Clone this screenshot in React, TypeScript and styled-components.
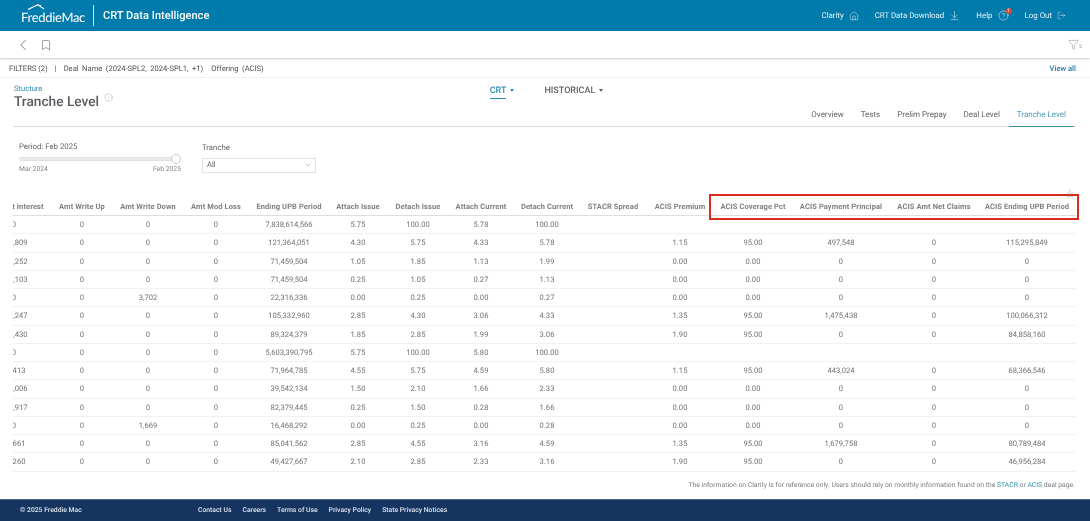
import { FC } from "react";
import styled, { createGlobalStyle } from "styled-components";
import {
  ArrowDownToLine,
  Bookmark,
  ChevronDown,
  ChevronLeft,
  CircleHelp,
  Funnel,
  House,
  Info,
  LogOut,
} from "lucide-react";

const GlobalStyle = createGlobalStyle`
  html, body {
    margin: 0;
    padding: 0;
    background: #fff;
    font-family: Roboto, "Liberation Sans", sans-serif;
    color: #5f6368;
  }
  * { box-sizing: border-box; }
`;

const Page = styled.div`
  width: 1090px;
  height: 521px;
  display: flex;
  flex-direction: column;
  overflow: hidden;
  will-change: transform;
  text-rendering: geometricPrecision;
`;

/* top bar */
const TopBar = styled.header`
  height: 31px;
  flex: none;
  background: #007bab;
  display: flex;
  align-items: center;
  justify-content: space-between;
  padding: 0 24px 0 21px;
  color: #fff;
`;
const Brand = styled.div`
  display: flex;
  align-items: center;
`;
const Logo = styled.div`
  position: relative;
  font-family: Lato, sans-serif;
  font-size: 13px;
  letter-spacing: -0.3px;
  width: 62px;
  padding-top: 3px;
  white-space: nowrap;
  svg {
    position: absolute;
    left: 7px;
    top: -2px;
  }
`;
const BrandDivider = styled.div`
  width: 1px;
  height: 21px;
  background: #d7ecf4;
  margin: 0 9px 0 10px;
`;
const AppName = styled.div`
  font-size: 11.1px;
  font-weight: 500;
  white-space: nowrap;
`;
const TopNav = styled.nav`
  display: flex;
  align-items: center;
  gap: 16px;
`;
const TopLink = styled.a`
  position: relative;
  display: flex;
  align-items: center;
  gap: 5px;
  font-size: 7.9px;
  color: #e6f3f8;
  white-space: nowrap;
`;
const Alert = styled.span`
  position: absolute;
  right: -3px;
  top: -2px;
  width: 6px;
  height: 6px;
  border-radius: 50%;
  background: #e2482d;
  color: #fff;
  font-size: 5px;
  line-height: 6px;
  text-align: center;
`;

/* toolbar + filters */
const Toolbar = styled.div`
  height: 27px;
  flex: none;
  display: flex;
  align-items: center;
  justify-content: space-between;
  padding: 0 8px 0 14px;
  box-shadow: 0 1px 2px rgba(0, 0, 0, 0.22);
  position: relative;
`;
const ToolGroup = styled.div`
  display: flex;
  align-items: center;
  gap: 7.5px;
  color: #555;
`;
const FilterIcon = styled.div`
  display: flex;
  align-items: flex-end;
  color: #777;
  font-size: 5px;
  line-height: 5px;
`;
const FilterBar = styled.div`
  height: 20px;
  flex: none;
  display: flex;
  align-items: center;
  padding: 2px 14px 0 9px;
  font-size: 7.6px;
  color: #4c4f53;
  border-bottom: 1px solid #f1f1f1;
  white-space: pre;
`;
const FilterSep = styled.span`
  margin: 0 7px;
`;
const FilterItem = styled.span`
  margin-right: 8px;
  word-spacing: 1.6px;
`;
const ViewAll = styled.a`
  margin-left: auto;
  color: #2a79a8;
  font-weight: 500;
`;

/* title area */
const TitleArea = styled.section`
  height: 49px;
  flex: none;
  margin: 0 14px 0 13px;
  border-bottom: 1px solid #dcdcdc;
  display: grid;
  grid-template-columns: 1fr auto 1fr;
  position: relative;
`;
const TitleBlock = styled.div`
  padding: 6px 0 0 1px;
`;
const Crumb = styled.div`
  font-size: 7.6px;
  line-height: 10px;
  color: #2b8db3;
`;
const TitleRow = styled.div`
  display: flex;
  align-items: flex-start;
  gap: 5px;
  color: #5a5d61;
  svg {
    margin-top: -1px;
    color: #999;
  }
`;
const Title = styled.h1`
  margin: 0;
  font-size: 13.7px;
  line-height: 17px;
  font-weight: 500;
`;
const Modes = styled.div`
  display: flex;
  gap: 30px;
  padding: 7px 0 0 4px;
`;
const Mode = styled.div<{ $active?: boolean }>`
  display: flex;
  gap: 4px;
  font-size: 9px;
  line-height: 12px;
  font-weight: 500;
  height: 14px;
  color: ${(p) => (p.$active ? "#2b8db3" : "#5f6368")};
  span {
    border-bottom: ${(p) => (p.$active ? "1px solid #2b8db3" : "none")};
  }
  &::after {
    content: "";
    width: 0;
    height: 0;
    margin-top: 4px;
    border-left: 2.5px solid transparent;
    border-right: 2.5px solid transparent;
    border-top: 3px solid currentColor;
  }
`;
const Tabs = styled.div`
  display: flex;
  justify-content: flex-end;
  align-items: flex-end;
  gap: 1px;
  padding-right: 2px;
`;
const Tab = styled.a<{ $active?: boolean }>`
  font-size: 8px;
  line-height: 11px;
  padding: 0 8px 6px;
  margin-bottom: -1px;
  white-space: nowrap;
  color: ${(p) => (p.$active ? "#4f9cbb" : "#5f6368")};
  border-bottom: 1.5px solid ${(p) => (p.$active ? "#3d8fb0" : "transparent")};
`;

/* period + tranche */
const Controls = styled.section`
  height: 71px;
  flex: none;
  display: flex;
  gap: 21px;
  padding: 15px 0 0 19px;
`;
const PeriodBox = styled.div`
  width: 162px;
`;
const ControlLabel = styled.div`
  font-size: 7.8px;
  line-height: 10px;
  color: #5f6368;
`;
const Track = styled.div`
  position: relative;
  height: 4px;
  margin-top: 5px;
  border-radius: 2px;
  background: #ececec;
  border: 1px solid #e0e0e0;
`;
const Knob = styled.div`
  position: absolute;
  right: -1px;
  top: -4px;
  width: 10px;
  height: 10px;
  border-radius: 50%;
  background: #fff;
  border: 1px solid #c9c9c9;
`;
const RangeLabels = styled.div`
  display: flex;
  justify-content: space-between;
  margin-top: 4px;
  font-size: 6.8px;
  line-height: 9px;
  color: #85888c;
`;
const TrancheBox = styled.div`
  padding-top: 1px;
`;
const Select = styled.div`
  width: 114px;
  height: 15px;
  margin-top: 5px;
  border: 1px solid #e2e2e2;
  display: flex;
  align-items: center;
  justify-content: space-between;
  padding: 0 3px 2px 4px;
  font-size: 7.6px;
  color: #5f6368;
  svg {
    color: #777;
  }
`;

/* table */
const COLUMNS = "72px 64px 68px 68px 78px 60px 60px 66px 66px 66px 68px 78px 98px 88px 98px";

const TableArea = styled.section`
  flex: none;
  height: 274px;
  margin: 0 14px 0 13px;
  overflow: hidden;
`;
const Scroller = styled.div`
  width: 1098px;
  margin-left: -35px;
`;
const HeadRow = styled.div`
  display: grid;
  grid-template-columns: ${COLUMNS};
  height: 18px;
  align-items: center;
  border-bottom: 1px solid #dedede;
  font-size: 7.5px;
  font-weight: 700;
  color: #7d7f83;
  letter-spacing: 0.1px;
`;
const Row = styled.div`
  display: grid;
  grid-template-columns: ${COLUMNS};
  height: 18.25px;
  align-items: center;
  border-bottom: 1px solid #f1f1f1;
  font-size: 7.6px;
  color: #707377;
`;
const Cell = styled.div`
  text-align: center;
  white-space: nowrap;
  display: flex;
  justify-content: center;
`;
const Highlight = styled.div`
  position: absolute;
  left: 709px;
  top: -4px;
  width: 370px;
  height: 26px;
  border: 2px solid #d92b1c;
  pointer-events: none;
`;
const ExportIcon = styled.div`
  position: absolute;
  right: 15px;
  top: -10px;
  color: #888;
  display: flex;
`;
const TableShell = styled.div`
  position: relative;
  flex: none;
`;
const Note = styled.div`
  flex: none;
  height: 27px;
  padding: 8px 15px 0 0;
  text-align: right;
  font-size: 6.8px;
  line-height: 10px;
  color: #7a7d81;
  a {
    color: #2f93a8;
  }
`;

/* footer */
const Footer = styled.footer`
  flex: 1;
  background: #15345f;
  border-top: 1px solid #4a6485;
  display: flex;
  align-items: center;
  padding: 0 0 1px 20px;
  color: #dfe5ee;
  font-size: 6.8px;
  font-weight: 500;
`;
const Copy = styled.span`
  width: 178px;
`;
const FooterLinks = styled.div`
  display: flex;
  gap: 11px;
`;

const HEADERS = [
  "Payment Interest",
  "Amt Write Up",
  "Amt Write Down",
  "Amt Mod Loss",
  "Ending UPB Period",
  "Attach Issue",
  "Detach Issue",
  "Attach Current",
  "Detach Current",
  "STACR Spread",
  "ACIS Premium",
  "ACIS Coverage Pct",
  "ACIS Payment Principal",
  "ACIS Amt Net Claims",
  "ACIS Ending UPB Period",
];

const ROWS: string[][] = [
  ["0", "0", "0", "0", "7,838,614,566", "5.75", "100.00", "5.78", "100.00", "", "", "", "", "", ""],
  ["318,809", "0", "0", "0", "121,364,051", "4.30", "5.75", "4.33", "5.78", "", "1.15", "95.00", "497,548", "0", "115,295,849"],
  ["187,252", "0", "0", "0", "71,459,504", "1.05", "1.85", "1.13", "1.99", "", "0.00", "0.00", "0", "0", "0"],
  ["187,103", "0", "0", "0", "71,459,504", "0.25", "1.05", "0.27", "1.13", "", "0.00", "0.00", "0", "0", "0"],
  ["0", "0", "3,702", "0", "22,316,336", "0.00", "0.25", "0.00", "0.27", "", "0.00", "0.00", "0", "0", "0"],
  ["276,247", "0", "0", "0", "105,332,960", "2.85", "4.30", "3.06", "4.33", "", "1.35", "95.00", "1,475,438", "0", "100,066,312"],
  ["234,430", "0", "0", "0", "89,324,379", "1.85", "2.85", "1.99", "3.06", "", "1.90", "95.00", "0", "0", "84,858,160"],
  ["0", "0", "0", "0", "5,603,390,795", "5.75", "100.00", "5.80", "100.00", "", "", "", "", "", ""],
  ["88,413", "0", "0", "0", "71,964,785", "4.55", "5.75", "4.59", "5.80", "", "1.15", "95.00", "443,024", "0", "68,366,546"],
  ["103,006", "0", "0", "0", "39,542,134", "1.50", "2.10", "1.66", "2.33", "", "0.00", "0.00", "0", "0", "0"],
  ["215,917", "0", "0", "0", "82,379,445", "0.25", "1.50", "0.28", "1.66", "", "0.00", "0.00", "0", "0", "0"],
  ["0", "0", "1,669", "0", "16,468,292", "0.00", "0.25", "0.00", "0.28", "", "0.00", "0.00", "0", "0", "0"],
  ["22,661", "0", "0", "0", "85,041,562", "2.85", "4.55", "3.16", "4.59", "", "1.35", "95.00", "1,679,758", "0", "80,789,484"],
  ["29,260", "0", "0", "0", "49,427,667", "2.10", "2.85", "2.33", "3.16", "", "1.90", "95.00", "0", "0", "46,956,284"],
];

const TABS = ["Overview", "Tests", "Prelim Prepay", "Deal Level", "Tranche Level"];
const FOOTER_LINKS = ["Contact Us", "Careers", "Terms of Use", "Privacy Policy", "State Privacy Notices"];

const App: FC = () => (
  <Page>
    <GlobalStyle />
    <TopBar>
      <Brand>
        <Logo>
          <svg width="20" height="6" viewBox="0 0 20 6" fill="none" stroke="#fff" strokeWidth="1.2">
            <path d="M0 5.5 L4 3.5 L10 0.8 L16 5 M12.5 1 L12.5 3" />
          </svg>
          FreddieMac
        </Logo>
        <BrandDivider />
        <AppName>CRT Data Intelligence</AppName>
      </Brand>
      <TopNav>
        <TopLink>
          Clarity <House size={10} strokeWidth={1.2} />
        </TopLink>
        <TopLink>
          CRT Data Download <ArrowDownToLine size={11} strokeWidth={1.2} />
        </TopLink>
        <TopLink>
          Help <CircleHelp size={11} strokeWidth={1.2} />
          <Alert>1</Alert>
        </TopLink>
        <TopLink>
          Log Out <LogOut size={9} strokeWidth={1.2} />
        </TopLink>
      </TopNav>
    </TopBar>

    <Toolbar>
      <ToolGroup>
        <ChevronLeft size={18} strokeWidth={1} />
        <Bookmark size={12} strokeWidth={1.1} />
      </ToolGroup>
      <FilterIcon>
        <Funnel size={11} strokeWidth={1} />2
      </FilterIcon>
    </Toolbar>

    <FilterBar>
      FILTERS (2)
      <FilterSep>|</FilterSep>
      <FilterItem>Deal Name (2024-SPL2, 2024-SPL1, +1)</FilterItem>
      <FilterItem>Offering (ACIS)</FilterItem>
      <ViewAll>View all</ViewAll>
    </FilterBar>

    <TitleArea>
      <TitleBlock>
        <Crumb>Stucture</Crumb>
        <TitleRow>
          <Title>Tranche Level</Title>
          <Info size={9} strokeWidth={1} />
        </TitleRow>
      </TitleBlock>
      <Modes>
        <Mode $active>
          <span>CRT</span>
        </Mode>
        <Mode>
          <span>HISTORICAL</span>
        </Mode>
      </Modes>
      <Tabs>
        {TABS.map((tab) => (
          <Tab key={tab} $active={tab === "Tranche Level"}>
            {tab}
          </Tab>
        ))}
      </Tabs>
    </TitleArea>

    <Controls>
      <PeriodBox>
        <ControlLabel>Period: Feb 2025</ControlLabel>
        <Track>
          <Knob />
        </Track>
        <RangeLabels>
          <span>Mar 2024</span>
          <span>Feb 2025</span>
        </RangeLabels>
      </PeriodBox>
      <TrancheBox>
        <ControlLabel>Tranche</ControlLabel>
        <Select>
          All <ChevronDown size={8} strokeWidth={1.2} />
        </Select>
      </TrancheBox>
    </Controls>

    <TableShell>
      <TableArea>
        <Scroller>
          <HeadRow>
            {HEADERS.map((h) => (
              <Cell key={h}>{h}</Cell>
            ))}
          </HeadRow>
          {ROWS.map((row, i) => (
            <Row key={i}>
              {row.map((value, j) => (
                <Cell key={j}>{value}</Cell>
              ))}
            </Row>
          ))}
        </Scroller>
      </TableArea>
      <Highlight />
      <ExportIcon>
        <ArrowDownToLine size={10} strokeWidth={1.1} />
      </ExportIcon>
    </TableShell>

    <Note>
      The information on Clarity is for reference only. Users should rely on monthly information found on the{" "}
      <a>STACR</a> or <a>ACIS</a> deal page.
    </Note>

    <Footer>
      <Copy>© 2025 Freddie Mac</Copy>
      <FooterLinks>
        {FOOTER_LINKS.map((link) => (
          <a key={link}>{link}</a>
        ))}
      </FooterLinks>
    </Footer>
  </Page>
);

export default App;
